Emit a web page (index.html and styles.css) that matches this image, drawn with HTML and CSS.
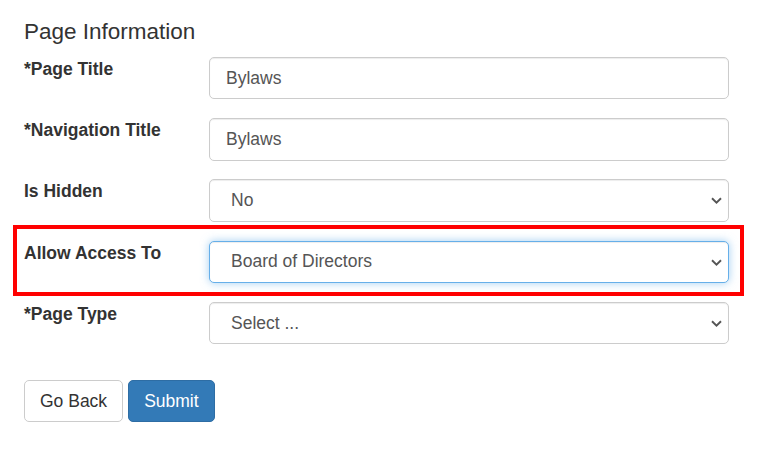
FILE: index.html
```html
<!DOCTYPE html>
<html>
<head>
<meta charset="utf-8">
<link rel="stylesheet" href="styles.css">
</head>
<body>
<div class="page">
  <h4 class="title">Page Information</h4>
  <form class="form">
    <div class="row">
      <label class="label">*Page Title</label>
      <input class="control" type="text" value="Bylaws">
    </div>
    <div class="row">
      <label class="label">*Navigation Title</label>
      <input class="control" type="text" value="Bylaws">
    </div>
    <div class="row">
      <label class="label">Is Hidden</label>
      <div class="select-wrap">
        <select class="control select"><option>No</option></select>
        <svg class="chev" width="11" height="7" viewBox="0 0 11 7"><path d="M1 1.2 L5.5 5.6 L10 1.2" fill="none" stroke="#555" stroke-width="1.9"/></svg>
      </div>
    </div>
    <div class="row highlighted">
      <label class="label">Allow Access To</label>
      <div class="select-wrap">
        <select class="control select focus"><option>Board of Directors</option></select>
        <svg class="chev" width="11" height="7" viewBox="0 0 11 7"><path d="M1 1.2 L5.5 5.6 L10 1.2" fill="none" stroke="#555" stroke-width="1.9"/></svg>
      </div>
      <div class="annot"></div>
    </div>
    <div class="row">
      <label class="label">*Page Type</label>
      <div class="select-wrap">
        <select class="control select"><option>Select ...</option></select>
        <svg class="chev" width="11" height="7" viewBox="0 0 11 7"><path d="M1 1.2 L5.5 5.6 L10 1.2" fill="none" stroke="#555" stroke-width="1.9"/></svg>
      </div>
    </div>
    <div class="actions">
      <button type="button" class="btn btn-default">Go Back</button>
      <button type="button" class="btn btn-primary">Submit</button>
    </div>
  </form>
</div>
</body>
</html>
```

FILE: styles.css
```css
* { box-sizing: border-box; }
html, body {
  margin: 0;
  padding: 0;
  background: #fff;
}
body {
  font-family: "Liberation Sans", Arial, Helvetica, sans-serif;
  font-size: 17.5px;
  line-height: 1.42857;
  color: #333;
}
.page {
  padding: 19.5px 0 0 24px;
}
.title {
  font-size: 22.5px;
  line-height: 24.75px;
  font-weight: normal;
  margin: 0 0 12.5px 0;
  color: #333;
}
.row {
  display: grid;
  grid-template-columns: 185px 520px;
  margin-bottom: 18.75px;
}
.highlighted {
  position: relative;
}
.annot {
  position: absolute;
  left: -11px;
  top: -16px;
  width: 731px;
  height: 71px;
  border: 4px solid #ff0000;
  pointer-events: none;
}
.label {
  font-weight: bold;
  font-size: 17.5px;
  line-height: 25px;
  color: #333;
}
.control {
  display: block;
  width: 520px;
  height: 42.5px;
  margin: 0;
  padding: 7.5px 15px 7.5px 16px;
  font-family: inherit;
  font-size: 17.5px;
  line-height: 25px;
  color: #555;
  background: #fff;
  border: 1px solid #ccc;
  border-radius: 5px;
  box-shadow: inset 0 1px 1px rgba(0,0,0,.075);
  outline: none;
}
.select-wrap {
  position: relative;
  width: 520px;
}
.select {
  -webkit-appearance: none;
  appearance: none;
  padding-left: 21px;
}
.focus {
  border-color: #66afe9;
  box-shadow: inset 0 1px 1px rgba(0,0,0,.075), 0 0 8px rgba(102,175,233,.6);
}
.chev {
  position: absolute;
  right: 7px;
  top: 18px;
  pointer-events: none;
}
.actions {
  display: flex;
  gap: 5px;
  margin-top: 35.5px;
}
.btn {
  height: 42.5px;
  padding: 7.5px 15px;
  font-family: inherit;
  font-size: 17.5px;
  line-height: 25px;
  border: 1px solid transparent;
  border-radius: 5px;
  cursor: pointer;
}
.btn-default {
  color: #333;
  background: #fff;
  border-color: #ccc;
}
.btn-primary {
  color: #fff;
  background: #337ab7;
  border-color: #2e6da4;
}
```
